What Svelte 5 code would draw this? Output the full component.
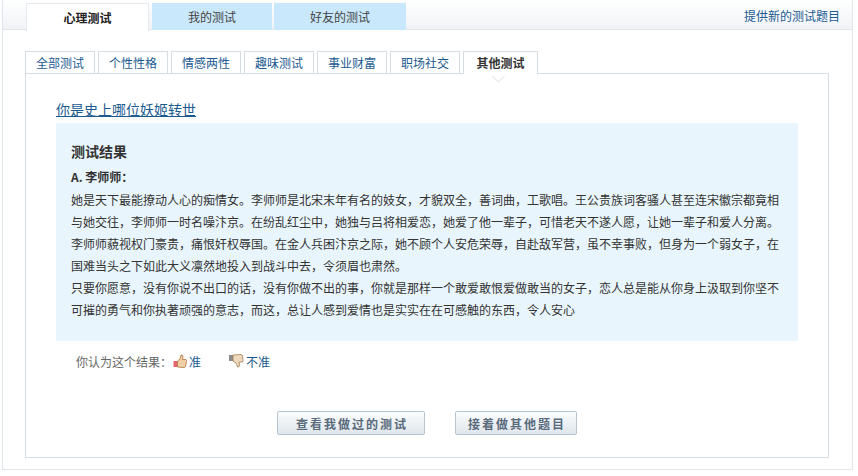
<script lang="ts">
	const tabs = ['心理测试', '我的测试', '好友的测试'];
	const categories = ['全部测试', '个性性格', '情感两性', '趣味测试', '事业财富', '职场社交', '其他测试'];
	const lines = [
		'她是天下最能撩动人心的痴情女。李师师是北宋末年有名的妓女，才貌双全，善词曲，工歌唱。王公贵族词客骚人甚至连宋徽宗都竟相',
		'与她交往，李师师一时名噪汴京。在纷乱红尘中，她独与吕将相爱恋，她爱了他一辈子，可惜老天不遂人愿，让她一辈子和爱人分离。',
		'李师师藐视权门豪贵，痛恨奸权辱国。在金人兵困汴京之际，她不顾个人安危荣辱，自赴敌军营，虽不幸事败，但身为一个弱女子，在',
		'国难当头之下如此大义凛然地投入到战斗中去，令须眉也肃然。',
		'只要你愿意，没有你说不出口的话，没有你做不出的事，你就是那样一个敢爱敢恨爱做敢当的女子，恋人总是能从你身上汲取到你坚不',
		'可摧的勇气和你执著顽强的意志，而这，总让人感到爱情也是实实在在可感触的东西，令人安心'
	];
</script>

<div class="page">
	<header class="top">
		<nav class="tabs">
			{#each tabs as tab, index (tab)}
				<span class="tab" class:current={index === 0}>{tab}</span>
			{/each}
		</nav>
		<span class="suggest">提供新的测试题目</span>
	</header>

	<div class="content">
		<nav class="cats">
			{#each categories as cat, index (cat)}
				<span class="cat" class:current={index === categories.length - 1}>{cat}</span>
			{/each}
		</nav>

		<main class="panel">
			<i class="notch"></i>
			<h1 class="title">你是史上哪位妖姬转世</h1>

			<section class="result">
				<h2>测试结果</h2>
				<h3>A. 李师师：</h3>
				{#each lines as line (line)}
					<p>{line}</p>
				{/each}
			</section>

			<div class="rate">
				<span class="ask">你认为这个结果：</span>
				<span class="vote up">
					<svg width="14" height="14" viewBox="0 0 14 14">
						<rect x="0.5" y="7" width="4" height="6" fill="#e8636b" />
						<path d="M4.5 7 L7 5 L8 1 Q10 0.5 10 3 L9.5 5.5 L13 5.5 Q14 6 13.500 7.500 L12.500 12.500 Q12 13.500 11 13.500 L4.500 13 Z" fill="#f0cfa6" stroke="#a9743f" stroke-width="0.8" />
					</svg>
					准
				</span>
				<span class="vote down">
					<svg width="15" height="14" viewBox="0 0 15 14">
						<rect x="0" y="1" width="4" height="6" fill="#8a8a86" />
						<path d="M4 1 L12 0.500 Q14 1 13.500 2.500 L14 7 Q14 8 12.500 8 L10 8 L10.500 11 Q10.500 13.500 8.500 13 L7.500 9.500 L4 7 Z" fill="#efd9bd" stroke="#a27c53" stroke-width="0.8" />
					</svg>
					不准
				</span>
			</div>

			<div class="actions">
				<button type="button" class="btn wide">查看我做过的测试</button>
				<button type="button" class="btn">接着做其他题目</button>
			</div>
		</main>
	</div>
</div>

<style>
	:global(body) {
		background: #fff;
		font-family: 'Noto Sans CJK SC', 'Liberation Sans', sans-serif;
		font-size: 12px;
	}

	.page {
		box-sizing: border-box;
		width: 851px;
		height: 470px;
		margin-left: 2px;
		border: 1px solid #e3e6ea;
		border-top: 0;
		border-left-color: #dce5ef;
	}

	.top {
		box-sizing: border-box;
		display: flex;
		justify-content: space-between;
		height: 30px;
		padding: 3px 12px 0 23px;
		background: linear-gradient(#fff, #f0f3f6);
		border-bottom: 1px solid #e1e5e9;
	}

	.tabs {
		display: flex;
		gap: 2px;
		height: 27px;
	}

	.tab {
		box-sizing: border-box;
		width: 120px;
		height: 27px;
		line-height: 27px;
		text-align: center;
		color: #444;
		background: #c9e8fb;
	}

	.tab:nth-child(3) {
		width: 132px;
	}

	.tab.current {
		width: 123px;
		margin-right: 1px;
		height: 28px;
		color: #222;
		font-weight: 700;
		background: #fff;
		border: 1px solid #e6eaee;
		border-bottom: 0;
	}

	.suggest {
		line-height: 26px;
		color: #1b5a90;
	}

	.content {
		padding: 21px 23px 0 22px;
	}

	.cats {
		display: flex;
		gap: 3px;
		height: 22px;
	}

	.cat {
		box-sizing: border-box;
		width: 70px;
		height: 23px;
		line-height: 22px;
		text-align: center;
		color: #1b5a90;
		border: 1px solid #d6dee3;
		border-bottom: 0;
	}

	.cat.current {
		width: 75px;
		color: #333;
		font-weight: 700;
		background: #fff;
		position: relative;
		z-index: 1;
	}

	.panel {
		box-sizing: border-box;
		position: relative;
		width: 804px;
		height: 385px;
		padding: 25px 30px 0;
		border: 1px solid #d6dee3;
	}

	.notch {
		position: absolute;
		left: 468px;
		top: -1px;
		width: 8px;
		height: 8px;
		background: #fff;
		border-right: 1px solid #dfe5e9;
		border-bottom: 1px solid #dfe5e9;
		transform: translateY(-1px) rotate(45deg);
	}

	.title {
		margin: 0;
		font-size: 14px;
		font-weight: 400;
		line-height: 20px;
		color: #1b5a90;
		text-decoration: underline;
	}

	.result {
		box-sizing: border-box;
		width: 742px;
		height: 218px;
		margin-top: 4px;
		padding: 18px 15px 0;
		background: #e9f5fc;
		color: #333;
	}

	.result h2 {
		margin: 0 0 5px;
		font-size: 14px;
		line-height: 20px;
		font-weight: 700;
	}

	.result h3 {
		margin: 0 0 1px;
		font-size: 12px;
		line-height: 22px;
		font-weight: 700;
	}

	.result p {
		margin: 0;
		line-height: 22px;
		white-space: nowrap;
	}

	.rate {
		display: flex;
		align-items: center;
		height: 20px;
		margin-top: 10px;
		padding-left: 20px;
		color: #666;
	}

	.ask {
		width: 97px;
	}

	.vote {
		display: flex;
		align-items: center;
		gap: 2px;
		color: #1b5a90;
	}

	.up {
		width: 56px;
	}

	.actions {
		display: flex;
		gap: 30px;
		margin-top: 40px;
		padding-left: 221px;
	}

	.btn {
		box-sizing: border-box;
		width: 122px;
		height: 24px;
		padding: 0 0 0 2px;
		font: 700 12px 'Noto Sans CJK SC', sans-serif;
		letter-spacing: 2px;
		color: #5a6b7c;
		background: linear-gradient(#fbfcfd, #dfe6ec);
		border: 1px solid #b4c4d1;
		border-radius: 2px;
	}

	.btn.wide {
		width: 148px;
	}
</style>
